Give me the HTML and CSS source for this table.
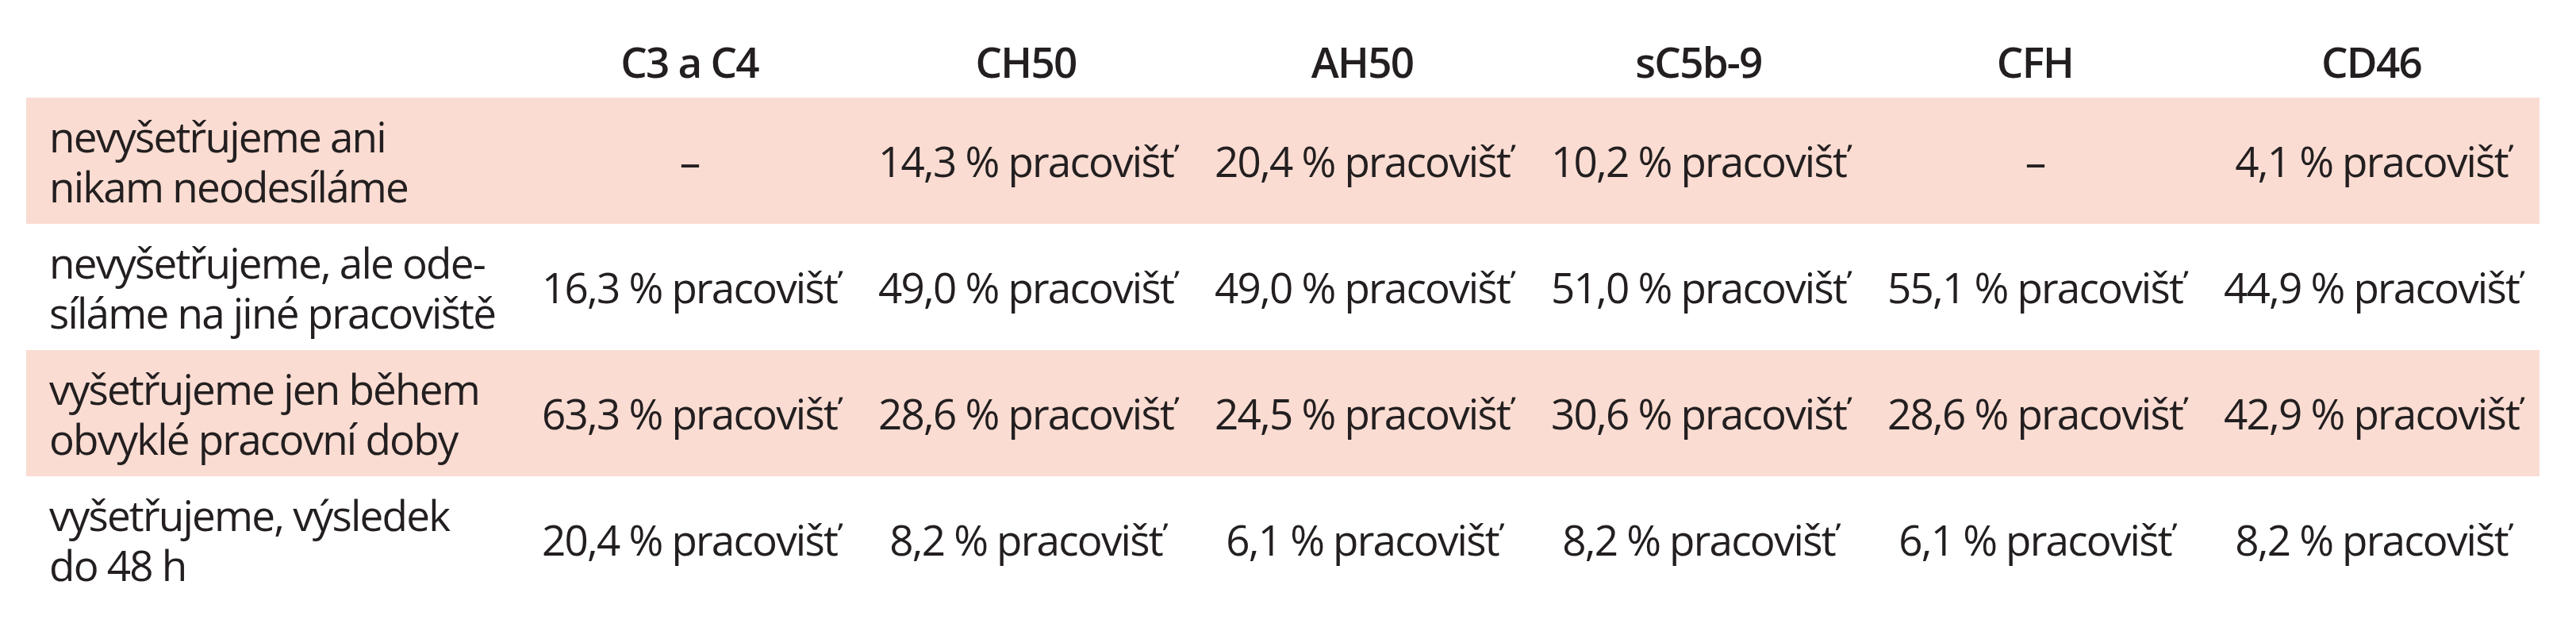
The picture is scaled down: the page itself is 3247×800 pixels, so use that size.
FILE: index.html
```html
<!DOCTYPE html>
<html lang="cs">
<head>
<meta charset="utf-8">
<title>Tabulka</title>
<link rel="stylesheet" href="styles.css">
</head>
<body>
<table class="data">
  <colgroup>
    <col class="col-label">
    <col class="col-val"><col class="col-val"><col class="col-val">
    <col class="col-val"><col class="col-val"><col class="col-val">
  </colgroup>
  <thead>
    <tr class="head">
      <th class="label"></th>
      <th>C3 a C4</th>
      <th>CH50</th>
      <th>AH50</th>
      <th>sC5b-9</th>
      <th>CFH</th>
      <th>CD46</th>
    </tr>
  </thead>
  <tbody>
    <tr class="shade">
      <td class="label">nevyšetřujeme ani
nikam neodesíláme</td>
      <td>–</td>
      <td>14,3 % pracovišť</td>
      <td>20,4 % pracovišť</td>
      <td>10,2 % pracovišť</td>
      <td>–</td>
      <td>4,1 % pracovišť</td>
    </tr>
    <tr>
      <td class="label">nevyšetřujeme, ale ode-
síláme na jiné pracoviště</td>
      <td>16,3 % pracovišť</td>
      <td>49,0 % pracovišť</td>
      <td>49,0 % pracovišť</td>
      <td>51,0 % pracovišť</td>
      <td>55,1 % pracovišť</td>
      <td>44,9 % pracovišť</td>
    </tr>
    <tr class="shade">
      <td class="label">vyšetřujeme jen během
obvyklé pracovní doby</td>
      <td>63,3 % pracovišť</td>
      <td>28,6 % pracovišť</td>
      <td>24,5 % pracovišť</td>
      <td>30,6 % pracovišť</td>
      <td>28,6 % pracovišť</td>
      <td>42,9 % pracovišť</td>
    </tr>
    <tr>
      <td class="label">vyšetřujeme, výsledek
do 48 h</td>
      <td>20,4 % pracovišť</td>
      <td>8,2 % pracovišť</td>
      <td>6,1 % pracovišť</td>
      <td>8,2 % pracovišť</td>
      <td>6,1 % pracovišť</td>
      <td>8,2 % pracovišť</td>
    </tr>
  </tbody>
</table>
</body>
</html>
```
FILE: styles.css
```css
html, body {
  margin: 0;
  padding: 0;
  background: #ffffff;
}

body {
  padding: 0 0 0 33px;
  font-family: "Open Sans", "Roboto", "Liberation Sans", sans-serif;
  font-size: 53px;
  line-height: 63px;
  letter-spacing: -1.8px;
  color: #231f20;
}

.data {
  border-collapse: collapse;
  border-spacing: 0;
  table-layout: fixed;
  width: 3168px;
}

.col-label { width: 624px; }
.col-val { width: 424px; }

.data th,
.data td {
  padding: 0;
  text-align: center;
  vertical-align: middle;
  white-space: nowrap;
}

.head th {
  font-weight: 600;
  height: 123px;
  padding-top: 46px;
  padding-bottom: 14px;
  box-sizing: border-box;
  vertical-align: top;
}

.data tbody td {
  height: 159px;
  box-sizing: border-box;
}

.data .label {
  text-align: left;
  padding-left: 29px;
  white-space: pre-line;
}

.shade td {
  background: #fadcd2;
}
```
